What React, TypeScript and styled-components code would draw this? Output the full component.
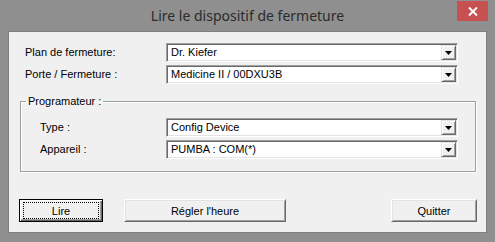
import * as React from 'react';
import styled, { createGlobalStyle } from 'styled-components';

const GlobalStyle = createGlobalStyle`
  html, body {
    margin: 0;
    padding: 0;
    background: #8f8f8f;
  }
  body {
    font-family: "Liberation Sans", Arial, sans-serif;
    font-size: 11px;
    color: #000;
  }
`;

const Window = styled.div`
  width: 495px;
  height: 242px;
  box-sizing: border-box;
  background: #8f8f8f;
  display: flex;
  flex-direction: column;
`;

const TitleBar = styled.div`
  position: relative;
  height: 31px;
  display: flex;
  align-items: center;
  justify-content: center;
`;

const Title = styled.div`
  font-family: "Noto Sans", "Open Sans", sans-serif;
  font-size: 14px;
  color: #2b2b2b;
  margin-top: -1px;
`;

const CloseButton = styled.div`
  position: absolute;
  top: 1px;
  right: 7px;
  width: 31px;
  height: 20px;
  background: #c75050;
  display: flex;
  align-items: center;
  justify-content: center;
`;

const Client = styled.div`
  flex: 1;
  margin: 0 8px 9px 8px;
  border: 1px solid #7f7f7f;
  background: #f0f0f0;
  display: flex;
  flex-direction: column;
`;

const FieldGrid = styled.div<{ $labelWidth: number; $pad: string }>`
  display: grid;
  grid-template-columns: ${p => p.$labelWidth}px 292px;
  row-gap: 3px;
  align-items: center;
  padding: ${p => p.$pad};
`;

const Label = styled.label`
  line-height: 19px;
  white-space: nowrap;
`;

const Combo = styled.div`
  height: 19px;
  box-sizing: border-box;
  background: #fff;
  border: 1px solid;
  border-color: #a0a0a0 #fff #fff #a0a0a0;
  box-shadow: inset 1px 1px #696969, inset -1px -1px #e3e3e3;
  padding: 1px;
  display: flex;
`;

const ComboValue = styled.div`
  flex: 1;
  padding-left: 3px;
  line-height: 15px;
  white-space: nowrap;
  overflow: hidden;
`;

const DropButton = styled.div`
  width: 15px;
  box-sizing: border-box;
  background: #f0f0f0;
  border: 1px solid;
  border-color: #e3e3e3 #696969 #696969 #e3e3e3;
  box-shadow: inset 1px 1px #fff, inset -1px -1px #a0a0a0;
  display: flex;
  align-items: center;
  justify-content: center;
`;

const GroupBox = styled.fieldset`
  margin: 10px 10px 0 11px;
  padding: 10px 16px 12px 19px;
  border: 1px solid #a0a0a0;
  box-shadow: 1px 1px #fff, inset 1px 1px #fff;
  min-width: 0;
`;

const Legend = styled.legend`
  padding: 0 2px;
  margin-left: -14px;
  line-height: 14px;
`;

const InnerGrid = styled(FieldGrid)`
  padding: 0;
`;

const ButtonRow = styled.div`
  display: flex;
  align-items: flex-start;
  gap: 21px;
  margin-top: 27px;
  padding: 0 9px 0 10px;
`;

const Button = styled.button<{ $width: number; $default?: boolean }>`
  position: relative;
  width: ${p => p.$width}px;
  height: 23px;
  padding: 0;
  box-sizing: border-box;
  font-family: "Liberation Sans", Arial, sans-serif;
  font-size: 11px;
  color: #000;
  background: #f0f0f0;
  border: 1px solid;
  border-color: ${p => (p.$default ? '#000' : '#fff #696969 #696969 #fff')};
  box-shadow: ${p =>
    p.$default
      ? 'inset 1px 1px #fff, inset -1px -1px #696969, inset -2px -2px #a0a0a0'
      : 'inset 1px 1px #e3e3e3, inset -1px -1px #a0a0a0'};
  &:last-child {
    margin-left: auto;
  }
`;

const FocusRect = styled.span`
  position: absolute;
  inset: 2px 3px 2px 3px;
  border: 1px dotted #000;
  pointer-events: none;
`;

const Arrow = () => (
  <svg width="7" height="4" viewBox="0 0 7 4">
    <path d="M0 0h7L3.5 4z" fill="#000" />
  </svg>
);

const ComboBox = ({ value }: { value: string }) => (
  <Combo>
    <ComboValue>{value}</ComboValue>
    <DropButton>
      <Arrow />
    </DropButton>
  </Combo>
);

export default function App() {
  return (
    <Window>
      <GlobalStyle />
      <TitleBar>
        <Title>Lire le dispositif de fermeture</Title>
        <CloseButton>
          <svg width="10" height="9" viewBox="0 0 10 9">
            <path d="M1 0.5l8 8M9 0.5l-8 8" stroke="#fff" strokeWidth="2" />
          </svg>
        </CloseButton>
      </TitleBar>
      <Client>
        <FieldGrid $labelWidth={141} $pad="11px 0 0 16px">
          <Label>Plan de fermeture:</Label>
          <ComboBox value="Dr. Kiefer" />
          <Label>Porte / Fermeture :</Label>
          <ComboBox value="Medicine II / 00DXU3B" />
        </FieldGrid>
        <GroupBox>
          <Legend>Programateur :</Legend>
          <InnerGrid $labelWidth={126} $pad="0">
            <Label>Type :</Label>
            <ComboBox value="Config Device" />
            <Label>Appareil :</Label>
            <ComboBox value="PUMBA : COM(*)" />
          </InnerGrid>
        </GroupBox>
        <ButtonRow>
          <Button $width={84} $default>
            Lire
            <FocusRect />
          </Button>
          <Button $width={162}>Régler l'heure</Button>
          <Button $width={86}>Quitter</Button>
        </ButtonRow>
      </Client>
    </Window>
  );
}
